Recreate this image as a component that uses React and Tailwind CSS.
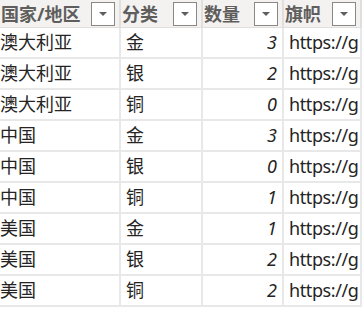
import React from "react";

const rows = [
  ["澳大利亚", "金", "3"],
  ["澳大利亚", "银", "2"],
  ["澳大利亚", "铜", "0"],
  ["中国", "金", "3"],
  ["中国", "银", "0"],
  ["中国", "铜", "1"],
  ["美国", "金", "1"],
  ["美国", "银", "2"],
  ["美国", "铜", "2"],
];

function Drop() {
  return (
    <div className="w-[24px] h-[24px] bg-white border border-[#8a8886] flex items-center justify-center shrink-0">
      <svg width="10" height="6" viewBox="0 0 10 6">
        <path d="M1 1 L9 1 L5 5 Z" fill="#605e5c" />
      </svg>
    </div>
  );
}

function Head({ label }) {
  return (
    <div className="h-[28px] flex items-center justify-between pl-[1px] pr-[4px] bg-[#f3f2f1] border-b border-[#e1dfdd] border-r-2 border-r-[#e1dfdd]">
      <span className="font-bold text-[18px] leading-none text-[#605e5c]">{label}</span>
      <Drop />
    </div>
  );
}

export default function App() {
  return (
    <div
      className="w-[362px] h-[309px] overflow-hidden bg-white"
      style={{ fontFamily: '"Noto Sans", "Noto Sans CJK SC", sans-serif' }}
    >
      <div className="grid grid-cols-[121px_82px_81px_78px] w-[362px]">
        <Head label="国家/地区" />
        <Head label="分类" />
        <Head label="数量" />
        <Head label="旗帜" />
        {rows.map((r, i) => (
          <React.Fragment key={i}>
            <div className="h-[31px] flex items-center pl-0 border-b-2 border-[#e8e8e8] border-r-2 border-r-[#e8e8e8] text-[18px] text-[#252423] whitespace-nowrap">
              {r[0]}
            </div>
            <div className="h-[31px] flex items-center pl-[5px] border-b-2 border-[#e8e8e8] border-r-2 border-r-[#e8e8e8] text-[18px] text-[#252423]">
              {r[1]}
            </div>
            <div className="h-[31px] flex items-center justify-end pr-[5px] border-b-2 border-[#e8e8e8] border-r-2 border-r-[#e8e8e8] text-[18px] italic text-[#252423]">
              {r[2]}
            </div>
            <div className="h-[31px] flex items-center pl-[5px] border-b-2 border-[#e8e8e8] border-r-2 border-r-[#e8e8e8] text-[18px] tracking-[-0.4px] text-[#252423] whitespace-nowrap overflow-hidden">
              https://g
            </div>
          </React.Fragment>
        ))}
      </div>
    </div>
  );
}
